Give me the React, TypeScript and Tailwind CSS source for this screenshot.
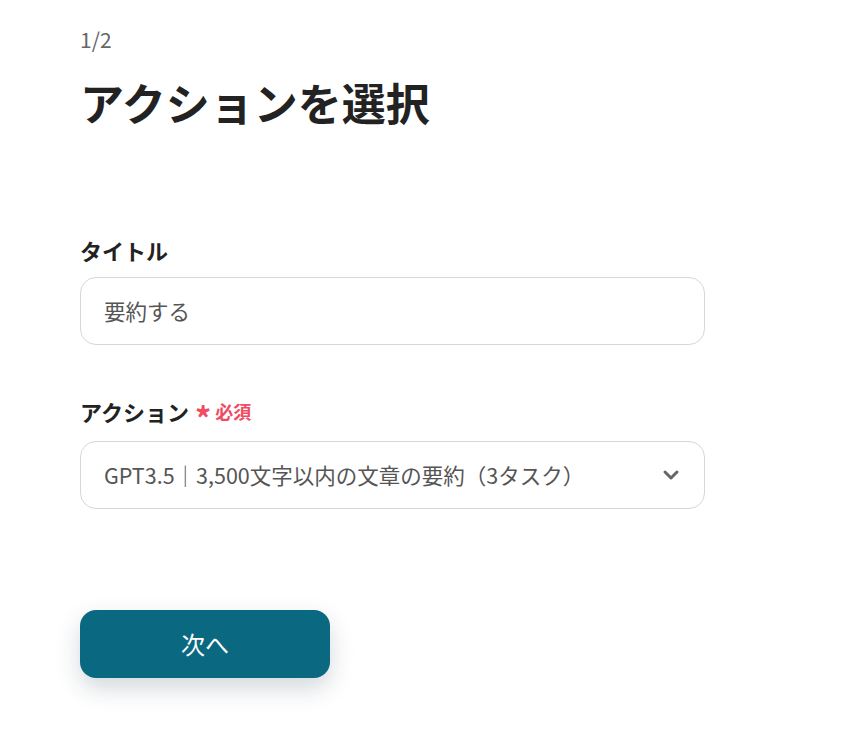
import React from 'react';
import { ChevronDown } from 'lucide-react';

const font = { fontFamily: '"Noto Sans CJK JP", "Noto Sans", sans-serif' };

const App = () => {
  return (
    <div className="min-h-screen bg-white text-[#222]" style={font}>
      <div className="pl-[80px] pt-[25px] w-[705px]">
        <p className="text-[21px] leading-[28px] text-[#666]">1/2</p>
        <h1 className="mt-[19px] text-[44px] leading-[60px] font-bold">アクションを選択</h1>

        <div className="mt-[103px]">
          <label className="block text-[22px] leading-[30px] font-bold">タイトル</label>
          <div className="mt-[12px] h-[68px] flex items-center px-[23px] border border-[#d4d7dd] rounded-[16px] text-[21.5px] text-[#555]">
            要約する
          </div>
        </div>

        <div className="mt-[44px]">
          <label className="flex items-center text-[22px] leading-[30px] font-bold">
            アクション
            <span className="ml-[6px] text-[#ef4c63] text-[32px] leading-none mt-[12px]">*</span>
            <span className="ml-[4px] text-[#ef4c63] text-[18px]">必須</span>
          </label>
          <div className="mt-[8px] h-[68px] flex items-center justify-between pl-[23px] pr-[21px] border border-[#d4d7dd] rounded-[16px] text-[21.5px] text-[#555]">
            <span>GPT3.5｜3,500文字以内の文章の要約（3タスク）</span>
            <ChevronDown className="w-[24px] h-[24px] text-[#666]" strokeWidth={3} />
          </div>
        </div>

        <button className="mt-[101px] w-[250px] h-[68px] rounded-[16px] bg-[#0b6881] text-white text-[24px] shadow-[0_10px_24px_rgba(0,40,60,0.18)]">
          次へ
        </button>
      </div>
    </div>
  );
};

export default App;
